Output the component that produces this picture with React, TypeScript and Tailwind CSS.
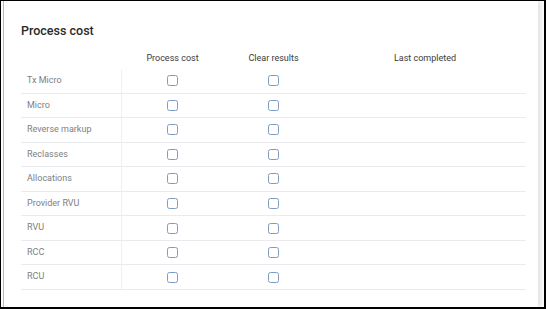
import React from "react";

const rows = [
    "Tx Micro",
    "Micro",
    "Reverse markup",
    "Reclasses",
    "Allocations",
    "Provider RVU",
    "RVU",
    "RCC",
    "RCU",
];

const Checkbox: React.FC = () => (
    <span className="block w-[11px] h-[11px] rounded-[2.5px] border border-[#7d9cc4] bg-white" />
);

const App: React.FC = () => {
    return (
        <div className="w-[546px] h-[309px] bg-white border-t border-l border-r-2 border-b-2 border-black pl-[2px] font-['Roboto',sans-serif] overflow-hidden">
            {/* Card */}
            <div className="w-[535px] h-full bg-white border-l border-[#a6bcd8] shadow-[3px_0_5px_rgba(0,0,0,0.12)] pl-[17px] pt-[22px]">
                <h2 className="text-[12.5px] leading-[16px] font-medium text-[#2a2a2a]">Process cost</h2>

                <div className="w-[505px] mt-[10px]">
                    {/* Header */}
                    <div className="grid grid-cols-[101px_101px_101px_1fr] h-[20px] items-center text-[9px] text-[#3a3a3a]">
                        <div />
                        <div className="text-center">Process cost</div>
                        <div className="text-center">Clear results</div>
                        <div className="text-center">Last completed</div>
                    </div>

                    {/* Rows */}
                    {rows.map((label) => (
                        <div
                            key={label}
                            className="grid grid-cols-[101px_101px_101px_1fr] h-[24.55px] border-b border-[#e9ebee] text-[9px]"
                        >
                            <div className="flex items-center pl-[6px] text-[#808080] border-r border-[#eef0f2]">
                                {label}
                            </div>
                            <div className="flex items-center justify-center">
                                <Checkbox />
                            </div>
                            <div className="flex items-center justify-center">
                                <Checkbox />
                            </div>
                            <div />
                        </div>
                    ))}
                </div>
            </div>
        </div>
    );
};

export default App;
